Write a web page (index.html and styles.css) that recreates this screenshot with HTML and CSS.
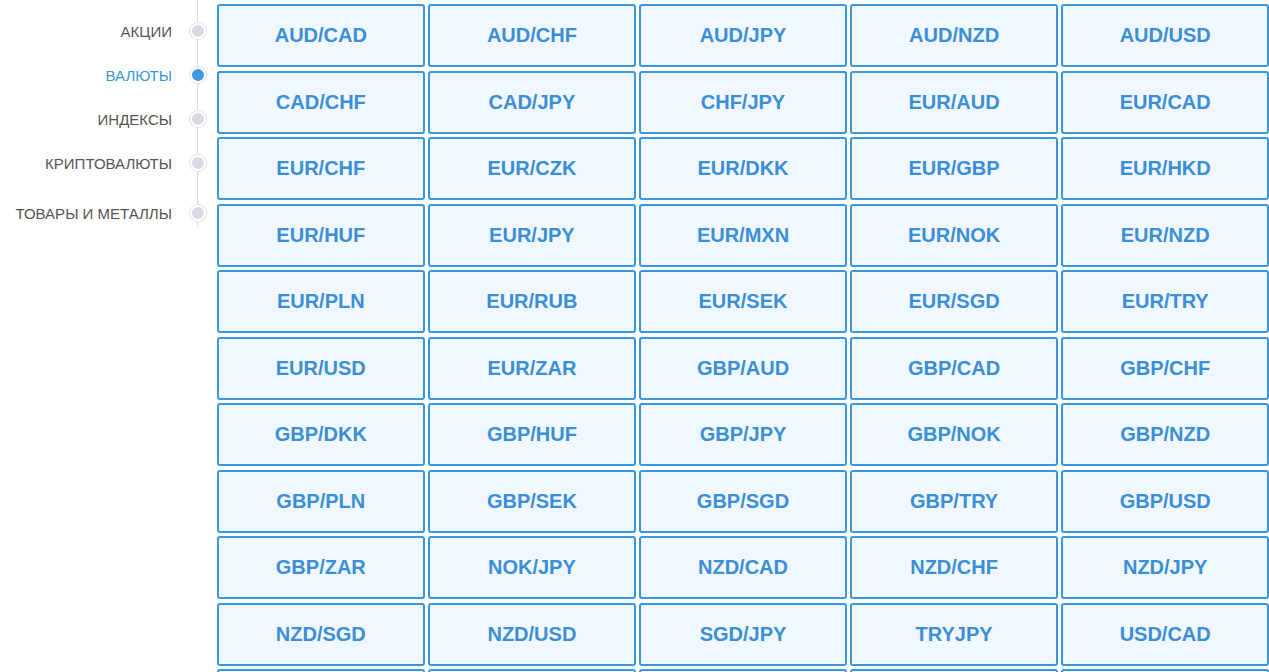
FILE: index.html
```html
<!DOCTYPE html>
<html lang="ru">
<head>
    <meta charset="UTF-8">
    <title>Валюты</title>
    <link rel="stylesheet" href="styles.css">
</head>
<body>
<div class="page">

    <!-- боковое меню категорий -->
    <nav class="side">
        <ul class="side-list">
            <li class="side-item"><span class="side-label">АКЦИИ</span><span class="dot"></span></li>
            <li class="side-item active"><span class="side-label">ВАЛЮТЫ</span><span class="dot"></span></li>
            <li class="side-item"><span class="side-label">ИНДЕКСЫ</span><span class="dot"></span></li>
            <li class="side-item"><span class="side-label">КРИПТОВАЛЮТЫ</span><span class="dot"></span></li>
            <li class="side-item last"><span class="side-label">ТОВАРЫ И МЕТАЛЛЫ</span><span class="dot"></span></li>
        </ul>
    </nav>

    <!-- сетка валютных пар -->
    <div class="pairs">
        <a class="pair">AUD/CAD</a>
        <a class="pair">AUD/CHF</a>
        <a class="pair">AUD/JPY</a>
        <a class="pair">AUD/NZD</a>
        <a class="pair">AUD/USD</a>

        <a class="pair">CAD/CHF</a>
        <a class="pair">CAD/JPY</a>
        <a class="pair">CHF/JPY</a>
        <a class="pair">EUR/AUD</a>
        <a class="pair">EUR/CAD</a>

        <a class="pair">EUR/CHF</a>
        <a class="pair">EUR/CZK</a>
        <a class="pair">EUR/DKK</a>
        <a class="pair">EUR/GBP</a>
        <a class="pair">EUR/HKD</a>

        <a class="pair">EUR/HUF</a>
        <a class="pair">EUR/JPY</a>
        <a class="pair">EUR/MXN</a>
        <a class="pair">EUR/NOK</a>
        <a class="pair">EUR/NZD</a>

        <a class="pair">EUR/PLN</a>
        <a class="pair">EUR/RUB</a>
        <a class="pair">EUR/SEK</a>
        <a class="pair">EUR/SGD</a>
        <a class="pair">EUR/TRY</a>

        <a class="pair">EUR/USD</a>
        <a class="pair">EUR/ZAR</a>
        <a class="pair">GBP/AUD</a>
        <a class="pair">GBP/CAD</a>
        <a class="pair">GBP/CHF</a>

        <a class="pair">GBP/DKK</a>
        <a class="pair">GBP/HUF</a>
        <a class="pair">GBP/JPY</a>
        <a class="pair">GBP/NOK</a>
        <a class="pair">GBP/NZD</a>

        <a class="pair">GBP/PLN</a>
        <a class="pair">GBP/SEK</a>
        <a class="pair">GBP/SGD</a>
        <a class="pair">GBP/TRY</a>
        <a class="pair">GBP/USD</a>

        <a class="pair">GBP/ZAR</a>
        <a class="pair">NOK/JPY</a>
        <a class="pair">NZD/CAD</a>
        <a class="pair">NZD/CHF</a>
        <a class="pair">NZD/JPY</a>

        <a class="pair">NZD/SGD</a>
        <a class="pair">NZD/USD</a>
        <a class="pair">SGD/JPY</a>
        <a class="pair">TRYJPY</a>
        <a class="pair">USD/CAD</a>

        <a class="pair">USD/CHF</a>
        <a class="pair">USD/CNH</a>
        <a class="pair">USD/CZK</a>
        <a class="pair">USD/DKK</a>
        <a class="pair">USD/HKD</a>
    </div>

</div>
</body>
</html>
```

FILE: styles.css
```css
/* общие стили */
body {
    margin: 0;
    padding: 0;
    background: #fff;
    font-family: "Liberation Sans", Arial, sans-serif;
}

.page {
    display: flex;
    align-items: flex-start;
}

/* боковое меню */
.side {
    position: relative;
    width: 217px;
    flex: none;
    height: 226px;
}

.side::before {
    content: "";
    position: absolute;
    left: 197px;
    top: 0;
    width: 1px;
    height: 226px;
    background: #dde0e8;
}

.side-list {
    list-style: none;
    margin: 0;
    padding: 9px 11px 0 0;
}

.side-item {
    display: flex;
    align-items: center;
    height: 44px;
    gap: 18px;
}

.side-item.last {
    margin-top: 6px;
}

.side-label {
    flex: 1;
    text-align: right;
    font-size: 15px;
    color: #555;
}

.dot {
    position: relative;
    width: 12px;
    height: 12px;
    border-radius: 50%;
    background: #d8dbe6;
    border: 2px solid #fff;
    box-shadow: 0 0 0 1px #dfe2ec;
}

.active .side-label {
    color: #3a97dc;
}

.active .dot {
    background: #3d98de;
}

/* сетка пар */
.pairs {
    flex: 1;
    display: grid;
    grid-template-columns: repeat(5, 1fr);
    grid-auto-rows: 63px;
    gap: 3.5px;
    padding-top: 4px;
}

.pair {
    display: flex;
    align-items: center;
    justify-content: center;
    border: 2px solid #3b97dc;
    border-radius: 3px;
    background: #f0f7fe;
    color: #3a8fd6;
    font-size: 20px;
    font-weight: bold;
    text-decoration: none;
    cursor: pointer;
}
```
